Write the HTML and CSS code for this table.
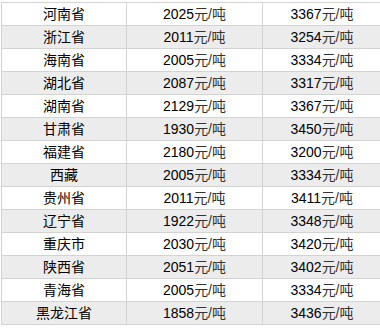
FILE: index.html
```html
<!DOCTYPE html>
<html lang="zh-CN">
<head>
  <meta charset="UTF-8" />
  <title>各省价格</title>
  <link rel="stylesheet" href="styles.css">
</head>
<body>
  <table class="price-table">
    <colgroup>
      <col class="col-name">
      <col class="col-low">
      <col class="col-high">
    </colgroup>
    <tbody>
      <tr><td>河南省</td><td>2025<span class="unit">元/吨</span></td><td>3367<span class="unit">元/吨</span></td></tr>
      <tr><td>浙江省</td><td>2011<span class="unit">元/吨</span></td><td>3254<span class="unit">元/吨</span></td></tr>
      <tr><td>海南省</td><td>2005<span class="unit">元/吨</span></td><td>3334<span class="unit">元/吨</span></td></tr>
      <tr><td>湖北省</td><td>2087<span class="unit">元/吨</span></td><td>3317<span class="unit">元/吨</span></td></tr>
      <tr><td>湖南省</td><td>2129<span class="unit">元/吨</span></td><td>3367<span class="unit">元/吨</span></td></tr>
      <tr><td>甘肃省</td><td>1930<span class="unit">元/吨</span></td><td>3450<span class="unit">元/吨</span></td></tr>
      <tr><td>福建省</td><td>2180<span class="unit">元/吨</span></td><td>3200<span class="unit">元/吨</span></td></tr>
      <tr><td>西藏</td><td>2005<span class="unit">元/吨</span></td><td>3334<span class="unit">元/吨</span></td></tr>
      <tr><td>贵州省</td><td>2011<span class="unit">元/吨</span></td><td>3411<span class="unit">元/吨</span></td></tr>
      <tr><td>辽宁省</td><td>1922<span class="unit">元/吨</span></td><td>3348<span class="unit">元/吨</span></td></tr>
      <tr><td>重庆市</td><td>2030<span class="unit">元/吨</span></td><td>3420<span class="unit">元/吨</span></td></tr>
      <tr><td>陕西省</td><td>2051<span class="unit">元/吨</span></td><td>3402<span class="unit">元/吨</span></td></tr>
      <tr><td>青海省</td><td>2005<span class="unit">元/吨</span></td><td>3334<span class="unit">元/吨</span></td></tr>
      <tr><td>黑龙江省</td><td>1858<span class="unit">元/吨</span></td><td>3436<span class="unit">元/吨</span></td></tr>
    </tbody>
  </table>
</body>
</html>
```

FILE: styles.css
```css
* {
  box-sizing: border-box;
}

body {
  margin: 0;
  padding: 2px 0 0 1px;
  background: #fff;
  font-family: 'Liberation Sans', 'Noto Sans CJK SC', sans-serif;
  font-size: 14px;
  color: #000;
}

.price-table {
  border-collapse: collapse;
  table-layout: fixed;
  width: 380px;
}

.col-name {
  width: 125px;
}

.col-low {
  width: 136px;
}

.col-high {
  width: 119px;
}

.price-table td {
  height: 23px;
  padding: 0;
  border: 1px solid #d3d3d3;
  text-align: center;
  vertical-align: middle;
  line-height: 20px;
  white-space: nowrap;
}

.price-table tr:nth-child(even) td {
  background: #ececec;
}

.unit {
  color: #333;
}
```
